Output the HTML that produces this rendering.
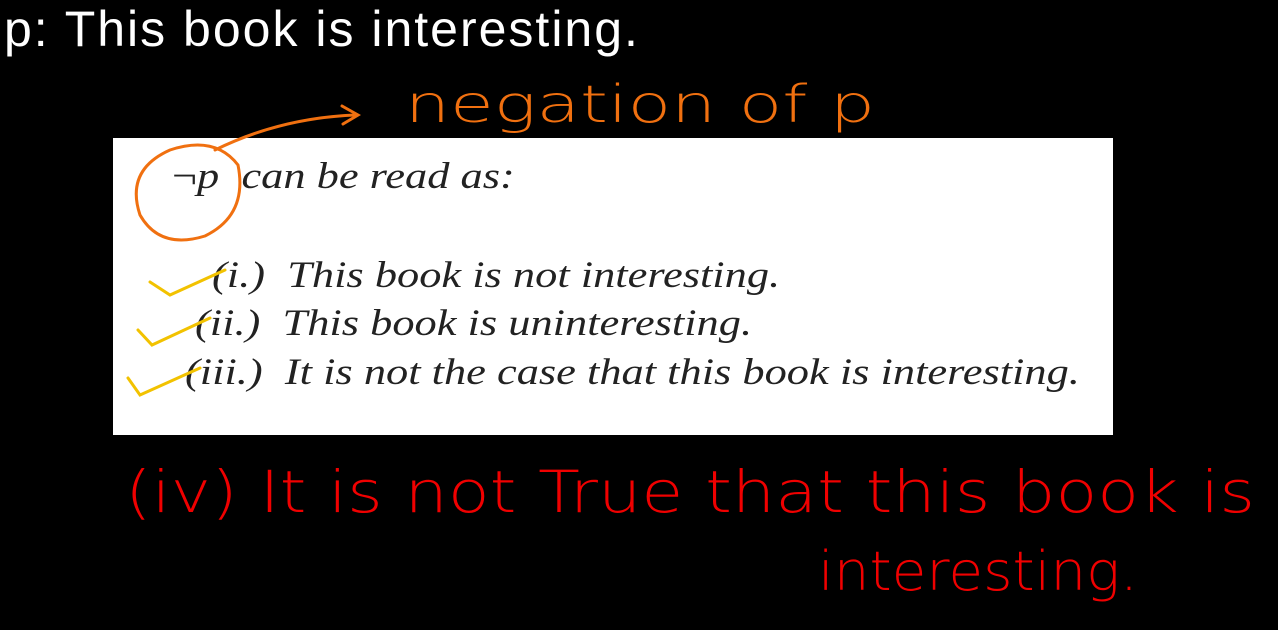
<!DOCTYPE html>
<html><head><style>
body{margin:0;width:1278px;height:630px;background:#000;overflow:hidden;position:relative;font-family:"Liberation Sans",sans-serif}
.t{position:absolute;left:4px;top:0px;color:#fff;font-size:50px;white-space:nowrap;letter-spacing:2px}
.box{position:absolute;left:113px;top:138px;width:1000px;height:297px;background:#fff}
.s{position:absolute;font-family:"Liberation Serif",serif;font-style:italic;font-size:37px;color:#222;white-space:nowrap;transform:scaleX(1.2);transform-origin:0 0}
svg{position:absolute;left:0;top:0}
</style></head><body>
<div class="t">p: This book is interesting.</div>
<div class="box"></div>
<div class="s" style="left:172px;top:155px"><span style="font-style:normal">¬</span>p &nbsp;can be read as:</div>
<div class="s" style="left:212px;top:254px">(i.) &nbsp;This book is not interesting.</div>
<div class="s" style="left:195px;top:302px">(ii.) &nbsp;This book is uninteresting.</div>
<div class="s" style="left:185px;top:351px">(iii.) &nbsp;It is not the case that this book is interesting.</div>
<svg width="1278" height="630">
<g fill="none" stroke="#f07010" stroke-width="3" stroke-linecap="round">
<path d="M238 165 Q248 215 205 236 Q160 250 140 215 Q125 170 170 150 Q215 135 238 165"/>
<path d="M215 150 Q280 118 355 115"/>
<path d="M342 106 L358 115 L343 124"/>
</g>
<text x="405" y="122" fill="#f07010" font-size="52" font-weight="200" font-family="DejaVu Sans, sans-serif" textLength="470" lengthAdjust="spacingAndGlyphs">negation of p</text>
<g fill="none" stroke="#f2c200" stroke-width="3" stroke-linecap="round">
<path d="M150 282 L170 295 L225 270"/>
<path d="M138 330 L152 345 L210 318"/>
<path d="M128 378 L140 395 L200 368"/>
</g>
<text x="125" y="512" fill="#f00000" font-size="58" font-weight="200" font-family="DejaVu Sans, sans-serif" textLength="1130" lengthAdjust="spacingAndGlyphs">(iv) It is not True that this book is</text>
<text x="818" y="590" fill="#f00000" font-size="54" font-weight="200" font-family="DejaVu Sans, sans-serif" textLength="320" lengthAdjust="spacingAndGlyphs">interesting.</text>
</svg>
</body></html>
